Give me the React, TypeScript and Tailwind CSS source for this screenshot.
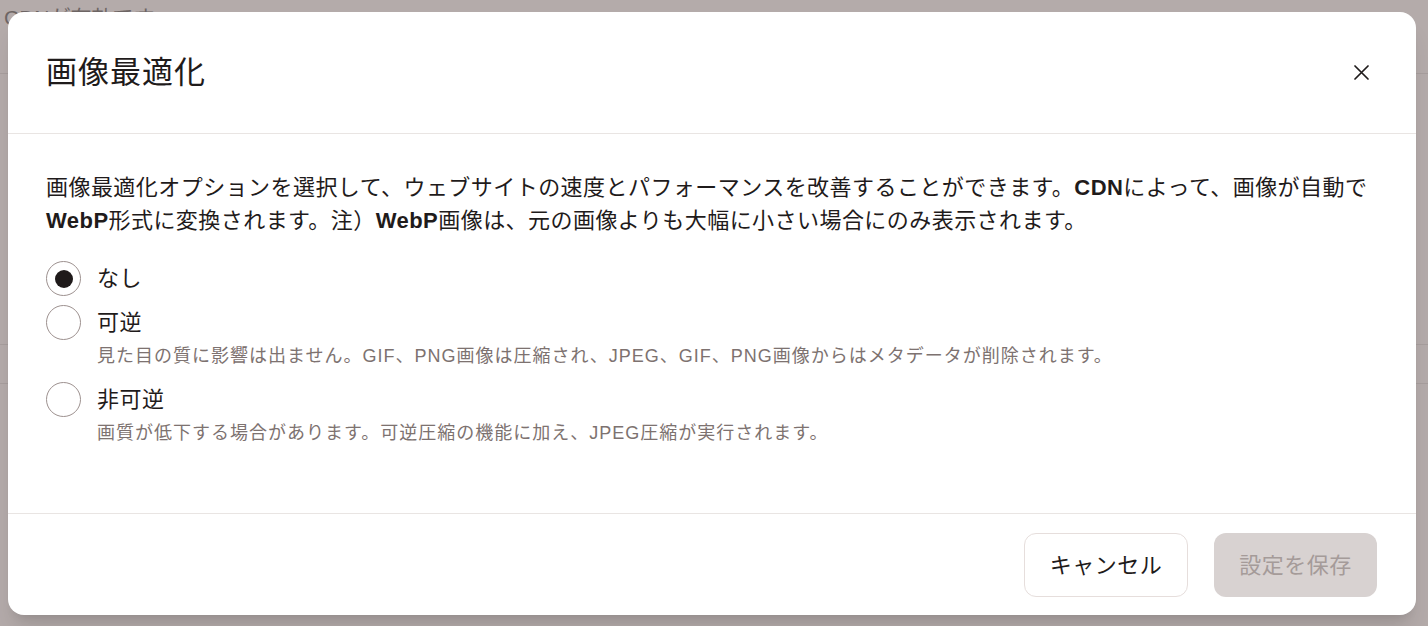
import { useState } from "react";

const FONT = '"Liberation Sans", "Noto Sans CJK JP", sans-serif';

type Option = { id: string; label: string; note?: string };

const options: Option[] = [
  { id: "none", label: "なし" },
  {
    id: "lossless",
    label: "可逆",
    note: "見た目の質に影響は出ません。GIF、PNG画像は圧縮され、JPEG、GIF、PNG画像からはメタデータが削除されます。",
  },
  {
    id: "lossy",
    label: "非可逆",
    note: "画質が低下する場合があります。可逆圧縮の機能に加え、JPEG圧縮が実行されます。",
  },
];

const Radio = ({ checked }: { checked: boolean }) => (
  <span className="flex h-[35px] w-[35px] shrink-0 items-center justify-center rounded-full border-[1.5px] border-[#9d918f] bg-white">
    {checked && <span className="h-[18px] w-[18px] rounded-full bg-[#1f1a1a]" />}
  </span>
);

const App = () => {
  const [selected, setSelected] = useState("none");

  return (
    <div
      className="relative h-[626px] w-[1428px] overflow-hidden bg-[#b4abaa]"
      style={{ fontFamily: FONT }}
    >
      {/* page behind the overlay */}
      <div className="absolute left-[4px] top-[2px] text-[21px] text-[#6d6564]">CDNが有効です</div>
      <div className="absolute left-0 right-0 top-[73px] h-px bg-[#a79e9d]" />
      <div className="absolute left-0 right-0 top-[344px] h-px bg-[#a79e9d]" />
      <div className="absolute left-0 right-0 top-[383px] h-px bg-[#a79e9d]" />

      <div className="relative ml-[8px] mt-[12px] flex h-[603px] w-[1408px] flex-col rounded-2xl bg-white shadow-xl">
        {/* header */}
        <div className="flex h-[122px] shrink-0 items-center justify-between border-b border-[#e9e5e3] pl-[38px] pr-[39px]">
          <h2 className="text-[31px] font-normal leading-none tracking-[1px] text-[#1f1b1b]">画像最適化</h2>
          <button className="flex h-8 w-8 items-center justify-center text-[#1f1b1b]">
            <svg width="15" height="15" viewBox="0 0 15 15" fill="none" stroke="currentColor" strokeWidth="1.7" strokeLinecap="round">
              <path d="M1 1l13 13M14 1L1 14" />
            </svg>
          </button>
        </div>

        {/* body */}
        <div className="flex-1 pl-[38px] pr-[24px] pt-[37px]">
          <p className="text-[22px] leading-[33px] tracking-[0.45px] text-[#1f1b1b]">
            画像最適化オプションを選択して、ウェブサイトの速度とパフォーマンスを改善することができます。<span className="font-bold">CDN</span>によって、画像が自動で<span className="font-bold">WebP</span>形式に変換されます。注）<span className="font-bold">WebP</span>画像は、元の画像よりも大幅に小さい場合にのみ表示されます。
          </p>

          <div className="mt-[24px] flex flex-col gap-[9px]">
            {options.map((o) => (
              <label
                key={o.id}
                className="flex cursor-pointer items-start gap-[16px]"
                onClick={() => setSelected(o.id)}
              >
                <Radio checked={selected === o.id} />
                <div>
                  <div className="text-[22px] leading-[35px] tracking-[0.5px] text-[#1f1b1b]">{o.label}</div>
                  {o.note && (
                    <div className="text-[18px] leading-[33px] tracking-[1px] text-[#7d7270]">{o.note}</div>
                  )}
                </div>
              </label>
            ))}
          </div>
        </div>

        {/* footer */}
        <div className="flex h-[102px] shrink-0 items-start justify-end gap-[26px] border-t border-[#e9e5e3] px-[39px] pt-[19px]">
          <button className="h-[64px] w-[164px] rounded-xl border border-[#e6dedc] bg-white text-[22px] tracking-[0.5px] text-[#1f1b1b]">
            キャンセル
          </button>
          <button
            disabled
            className="h-[64px] w-[163px] rounded-xl bg-[#d8d2d1] text-[22px] tracking-[0.5px] text-[#a59b99]"
          >
            設定を保存
          </button>
        </div>
      </div>
    </div>
  );
};

export default App;
